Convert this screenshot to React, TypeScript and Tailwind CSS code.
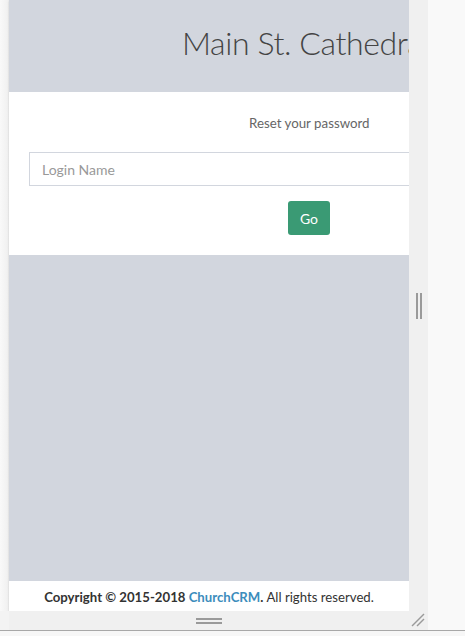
import React from "react";

export default function App() {
  return (
    <div className="w-[465px] h-[636px] bg-[#f9f9f9] flex flex-col overflow-hidden" style={{ fontFamily: "Lato, 'Open Sans', sans-serif" }}>
      <div className="flex h-[611px]">
        <div className="w-[9px] bg-gradient-to-r from-[#f9f9f9] to-[#efefef]" />
        <div className="w-[400px] h-full bg-[#d2d6de] flex flex-col overflow-hidden shadow-[0_1px_2px_rgba(0,0,0,0.15)]">
          <div className="h-[92px] pl-[173px] pt-[23px] whitespace-nowrap text-[32px] tracking-[-0.4px] font-light text-[#444] leading-[40px]">
            Main St. Cathedral
          </div>
          <div className="h-[163px] bg-white flex flex-col pl-[20px]">
            <div className="pt-[21px] pl-[220px] text-[13.3px] text-[#666] leading-[20px] whitespace-nowrap">Reset your password</div>
            <div className="mt-[19px] w-[420px] h-[34px] border border-[#d2d6de] flex items-center pl-[12px] text-[14px] text-[#999]">Login Name</div>
            <div className="mt-[15px] pl-[259px]">
              <div className="w-[42px] h-[34px] rounded-[3px] bg-[#3a9a74] text-white text-[14px] flex items-center justify-center">Go</div>
            </div>
          </div>
          <div className="flex-1" />
          <div className="h-[31px] bg-white border-t border-[#d2d6de] flex items-center justify-center pt-[3px] text-[13.2px] text-[#333] whitespace-nowrap">
            <span className="font-bold">Copyright © 2015-2018 <span className="text-[#3c8dbc]">ChurchCRM</span>.</span>
            <span>&nbsp;All rights reserved.</span>
          </div>
        </div>
        <div className="w-[19px] bg-[#f0f0f0] flex items-center justify-center gap-[2px]">
          <div className="w-[2px] h-[26px] bg-[#9a9a9a]" />
          <div className="w-[2px] h-[26px] bg-[#9a9a9a]" />
        </div>
      </div>
      <div className="h-[19px] flex">
        <div className="w-[9px] bg-[#f3f3f3]" />
        <div className="w-[419px] bg-[#f0f0f0] relative flex flex-col items-center justify-center gap-[2px] pr-[19px]">
          <div className="w-[26px] h-[2px] bg-[#9a9a9a]" />
          <div className="w-[26px] h-[2px] bg-[#9a9a9a]" />
          <svg className="absolute right-[3px] bottom-[3px]" width="14" height="14" viewBox="0 0 14 14">
            <line x1="1" y1="13" x2="13" y2="1" stroke="#9a9a9a" strokeWidth="1.5" />
            <line x1="6" y1="13" x2="13" y2="6" stroke="#9a9a9a" strokeWidth="1.5" />
          </svg>
        </div>
      </div>
      <div className="h-[1px] bg-[#a8a8a8]" />
      <div className="flex-1 bg-[#f7f7f7]" />
    </div>
  );
}
